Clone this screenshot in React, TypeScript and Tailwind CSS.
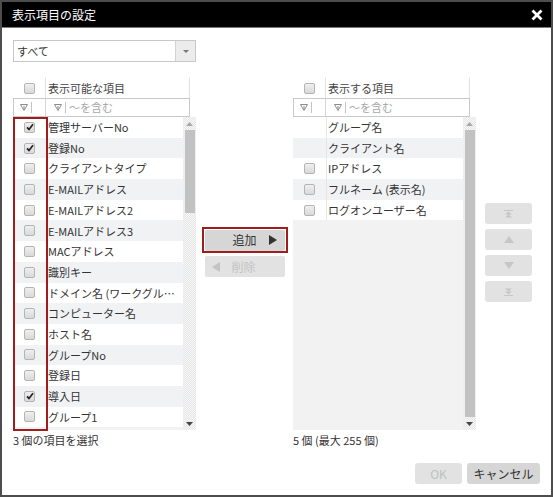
import React from "react";

type Item = { label: string; checked?: boolean; noBox?: boolean };

const LEFT_ITEMS: Item[] = [
  { label: "管理サーバーNo", checked: true },
  { label: "登録No", checked: true },
  { label: "クライアントタイプ" },
  { label: "E-MAILアドレス" },
  { label: "E-MAILアドレス2" },
  { label: "E-MAILアドレス3" },
  { label: "MACアドレス" },
  { label: "識別キー" },
  { label: "ドメイン名 (ワークグループ名)" },
  { label: "コンピューター名" },
  { label: "ホスト名" },
  { label: "グループNo" },
  { label: "登録日" },
  { label: "導入日", checked: true },
  { label: "グループ1" },
];

const RIGHT_ITEMS: Item[] = [
  { label: "グループ名", noBox: true },
  { label: "クライアント名", noBox: true },
  { label: "IPアドレス" },
  { label: "フルネーム (表示名)" },
  { label: "ログオンユーザー名" },
];

function Checkbox({ checked }: { checked?: boolean }) {
  return (
    <span className="flex h-[11px] w-[11px] items-center justify-center rounded-[2px] border border-[#b4b4b4] bg-linear-to-b from-[#efefef] to-[#d9d9d9]">
      {checked && (
        <svg width="8" height="8" viewBox="0 0 8 8">
          <path d="M1 4.3 L3 6.4 L7 1.3" fill="none" stroke="#222" strokeWidth="1.7" />
        </svg>
      )}
    </span>
  );
}

function FilterIcon() {
  return (
    <span className="flex items-center gap-[3px]">
      <svg width="8" height="7" viewBox="0 0 8 7">
        <path d="M0.5 0.5 H7.5 L4 6.5 Z" fill="none" stroke="#8a8a8a" strokeWidth="1" />
        <path d="M4 2 V5" stroke="#8a8a8a" strokeWidth="1" />
      </svg>
      <span className="h-[11px] w-px bg-[#c4c4c4]" />
    </span>
  );
}

function Scrollbar({ thumb }: { thumb: number | "full" }) {
  return (
    <div className="flex w-[13px] flex-col bg-[repeating-conic-gradient(#e6e6e6_0_25%,#f7f7f7_0_50%)] bg-[length:2px_2px]">
      <div className="flex h-[13px] items-center justify-center">
        <svg width="7" height="4" viewBox="0 0 7 4">
          <path d="M3.5 0 L7 4 H0 Z" fill="#a8a8a8" />
        </svg>
      </div>
      <div className="flex flex-1 flex-col items-center">
        {thumb === "full" ? (
          <div className="w-[10px] flex-1 bg-[#c2c2c2]" />
        ) : (
          <div className="w-[10px] bg-[#c2c2c2]" style={{ height: thumb }} />
        )}
      </div>
      <div className="flex h-[13px] items-center justify-center">
        <svg width="7" height="4" viewBox="0 0 7 4">
          <path d="M0 0 H7 L3.5 4 Z" fill="#444" />
        </svg>
      </div>
    </div>
  );
}

function ListPanel({
  title,
  items,
  thumb,
  footer,
  highlight,
}: {
  title: string;
  items: Item[];
  thumb: number | "full";
  footer: string;
  highlight?: boolean;
}) {
  return (
    <div className="flex w-[183px] flex-col">
      <div className="flex h-[20px] w-[177px] border-r border-[#e2e2e2]">
        <div className="flex w-[33px] items-center justify-center border-r border-[#e2e2e2]">
          <Checkbox />
        </div>
        <div className="flex items-center pl-[2px] text-[#444]">{title}</div>
      </div>
      <div className="flex h-[19px] w-[177px] border border-[#c9c9c9]">
        <div className="flex w-[32px] items-center pl-[6px] border-r border-[#d6d6d6]">
          <FilterIcon />
        </div>
        <div className="flex flex-1 items-center gap-[3px] pl-[8px] text-[#a8a8a8]">
          <FilterIcon />
          <span>～を含む</span>
        </div>
      </div>
      <div className="relative">
        <div className="flex h-[313px] overflow-hidden bg-[#f2f2f2]">
          <div className="flex w-[170px] flex-col">
            {items.map((item, i) => (
              <div
                key={item.label}
                className={`flex h-[20.7px] shrink-0 ${i % 2 === 1 ? "bg-[#f0f2f4]" : "bg-white"}`}
              >
                <div className="flex w-[34px] shrink-0 items-center justify-center border-r border-[#e6e6e6]">
                  {!item.noBox && <Checkbox checked={item.checked} />}
                </div>
                <div className="flex min-w-0 flex-1 items-center pl-px pr-[2px]">
                  <span className="truncate">{item.label}</span>
                </div>
              </div>
            ))}
          </div>
          <Scrollbar thumb={thumb} />
        </div>
        {highlight && (
          <div className="pointer-events-none absolute left-0 top-0 h-[314px] w-[35px] border-2 border-[#a11c1c]" />
        )}
      </div>
      <div className="mt-[3px] h-[15px] leading-[15px]">{footer}</div>
    </div>
  );
}

function SideButton({ children }: { children: React.ReactNode }) {
  return (
    <div className="flex h-[21px] w-[47px] items-center justify-center rounded-[3px] bg-[#e2e2e2]">
      {children}
    </div>
  );
}

export default function App() {
  const iconFill = "#c6c6c6";
  return (
    <div className="flex h-[497px] w-[553px] flex-col border-2 border-[#4d4d4d] bg-white font-['Noto_Sans_CJK_JP',sans-serif] text-[11px] text-[#333]">
      <div className="flex h-[26px] shrink-0 items-center justify-between bg-black pl-[10px] pr-[8px] border-b border-[#7a7a7a]">
        <span className="text-[12px] text-white">表示項目の設定</span>
        <svg width="12" height="12" viewBox="0 0 12 12">
          <path d="M1.5 1.5 L10.5 10.5 M10.5 1.5 L1.5 10.5" stroke="#fff" strokeWidth="2.8" />
        </svg>
      </div>

      <div className="flex flex-1 flex-col px-[11px] pt-[12px]">
        <div className="flex h-[22px] w-[183px] border border-[#c8c8c8]">
          <div className="flex flex-1 items-center pl-[3px]">すべて</div>
          <div className="flex w-[20px] items-center justify-center border-l border-[#d2d2d2] bg-[#ececec]">
            <svg width="6" height="3" viewBox="0 0 6 3">
              <path d="M0 0 H6 L3 3 Z" fill="#777" />
            </svg>
          </div>
        </div>

        <div className="mt-[16px] flex">
          <ListPanel title="表示可能な項目" items={LEFT_ITEMS} thumb={83} footer="3 個の項目を選択" highlight />

          <div className="flex w-[97px] flex-col items-center pt-[149px]">
            <div className="flex h-[26px] w-[86px] items-center justify-center border-2 border-[#a11c1c]">
              <div className="flex h-[21px] w-[80px] items-center justify-end gap-[12px] rounded-[2px] bg-[#d6d6d6] pr-[8px] text-[12px] text-[#333]">
                <span>追加</span>
                <svg width="8" height="10" viewBox="0 0 8 10">
                  <path d="M0 0 L8 5 L0 10 Z" fill="#333" />
                </svg>
              </div>
            </div>
            <div className="mt-[3px] flex h-[21px] w-[80px] items-center gap-[12px] rounded-[2px] bg-[#e2e2e2] pl-[7px] text-[12px] text-[#c2c2c2]">
              <svg width="8" height="10" viewBox="0 0 8 10">
                <path d="M8 0 L0 5 L8 10 Z" fill="#c4c4c4" />
              </svg>
              <span>削除</span>
            </div>
          </div>

          <ListPanel title="表示する項目" items={RIGHT_ITEMS} thumb="full" footer="5 個 (最大 255 個)" />

          <div className="ml-[9px] flex flex-col gap-[5px] pt-[125px]">
            <SideButton>
              <svg width="9" height="8" viewBox="0 0 9 8">
                <path d="M0 0 H9 V1 H0 Z M4.5 1.5 L8 4.5 H1 Z M4.5 4.5 L8 7.5 H1 Z" fill={iconFill} />
              </svg>
            </SideButton>
            <SideButton>
              <svg width="10" height="7" viewBox="0 0 10 7">
                <path d="M5 0 L10 7 H0 Z" fill={iconFill} />
              </svg>
            </SideButton>
            <SideButton>
              <svg width="10" height="7" viewBox="0 0 10 7">
                <path d="M0 0 H10 L5 7 Z" fill={iconFill} />
              </svg>
            </SideButton>
            <SideButton>
              <svg width="9" height="8" viewBox="0 0 9 8">
                <path d="M1 0.5 H8 L4.5 3.5 Z M1 3.5 H8 L4.5 6.5 Z M0 7 H9 V8 H0 Z" fill={iconFill} />
              </svg>
            </SideButton>
          </div>
        </div>

        <div className="mt-[15px] flex justify-end gap-[5px]">
          <div className="flex h-[21px] w-[47px] items-center justify-center rounded-[3px] bg-[#e2e2e2] text-[12px] text-[#c0c0c0]">
            OK
          </div>
          <div className="flex h-[21px] w-[73px] items-center justify-center rounded-[3px] bg-[#d6d6d6] text-[12px] text-[#333]">
            キャンセル
          </div>
        </div>
      </div>
    </div>
  );
}
